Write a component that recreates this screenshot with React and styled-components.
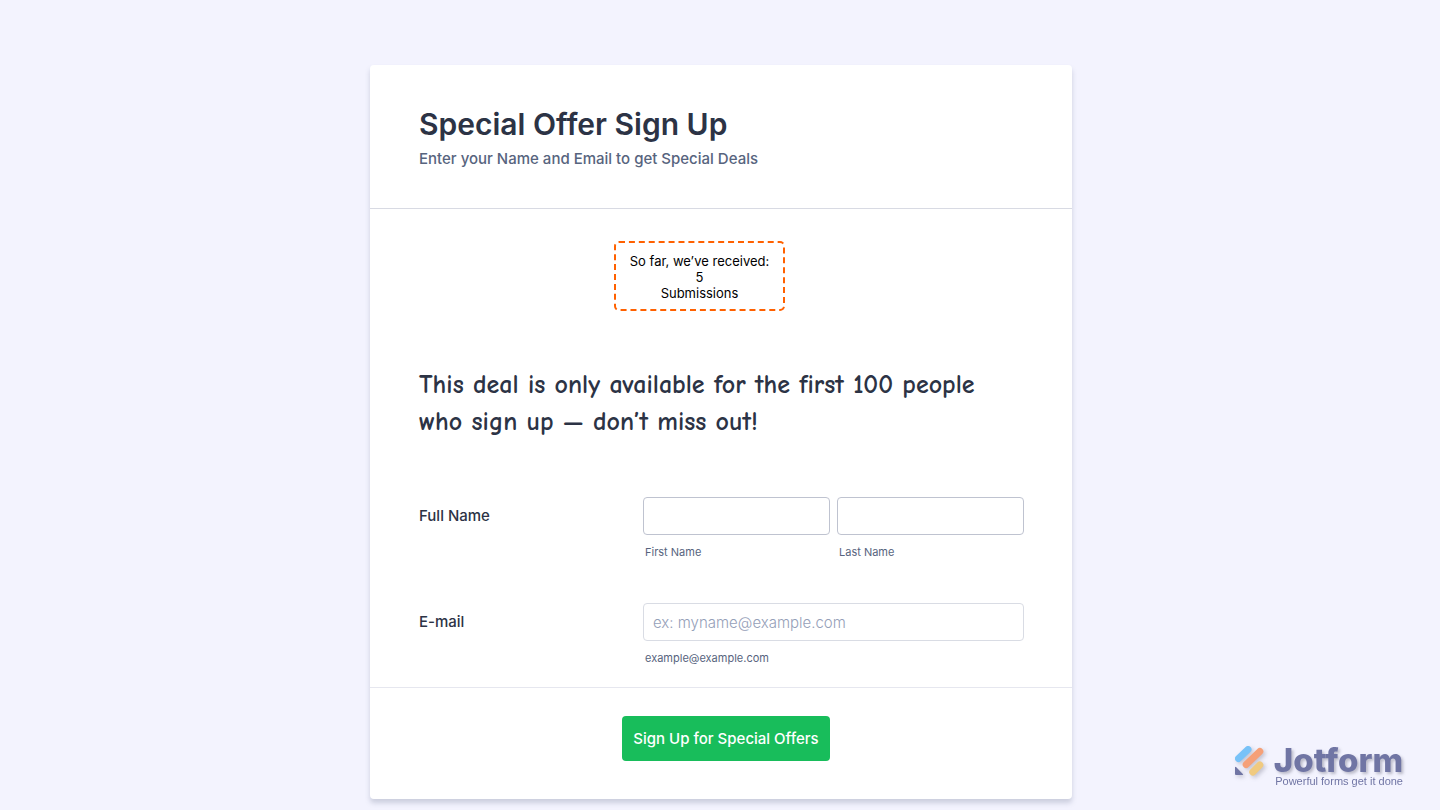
import { useState } from "react";
import styled, { createGlobalStyle } from "styled-components";

const submissions = 5;

export default function App() {
  const [form, setForm] = useState({ first: "", last: "", email: "" });

  const handleChange = (e) => {
    setForm({ ...form, [e.target.name]: e.target.value });
  };

  return (
    <>
      <GlobalStyle />
      <Page>
        <Card onSubmit={(e) => e.preventDefault()}>
          <Header>
            <h1>Special Offer Sign Up</h1>
            <p>Enter your Name and Email to get Special Deals</p>
          </Header>
          <Intro>
            <Counter>
              <span>So far, we’ve received:</span>
              <span>{submissions}</span>
              <span>Submissions</span>
            </Counter>
            <Deal>
              This deal is only available for the first 100 people who sign up
              — don’t miss out!
            </Deal>
          </Intro>
          <Fields>
            <Row role="group" aria-labelledby="name-label">
              <Label as="span" id="name-label">
                Full Name
              </Label>
              <Inputs>
                <Field>
                  <Input
                    id="first"
                    name="first"
                    value={form.first}
                    onChange={handleChange}
                  />
                  <SubLabel htmlFor="first">First Name</SubLabel>
                </Field>
                <Field>
                  <Input
                    id="last"
                    name="last"
                    value={form.last}
                    onChange={handleChange}
                  />
                  <SubLabel htmlFor="last">Last Name</SubLabel>
                </Field>
              </Inputs>
            </Row>
            <Row>
              <Label htmlFor="email">E-mail</Label>
              <Inputs>
                <Field>
                  <Input
                    id="email"
                    name="email"
                    type="email"
                    $light
                    placeholder="ex: myname@example.com"
                    value={form.email}
                    onChange={handleChange}
                  />
                  <SubLabel htmlFor="email">example@example.com</SubLabel>
                </Field>
              </Inputs>
            </Row>
          </Fields>
          <Footer>
            <SubmitButton type="submit">Sign Up for Special Offers</SubmitButton>
          </Footer>
        </Card>
      </Page>
      <Brand>
        <BrandMark />
        <div>
          <BrandName>Jotform</BrandName>
          <Tagline>Powerful forms get it done</Tagline>
        </div>
      </Brand>
    </>
  );
}

function BrandMark() {
  return (
    <svg width="32" height="34" viewBox="0 0 32 34" aria-hidden="true">
      <g strokeWidth="7" strokeLinecap="round">
        <path d="M4.5 13.5L14 4.5" stroke="#78c2f8" />
        <path d="M12.2 19.5L25.8 6.5" stroke="#f5a078" />
        <path d="M18.8 27L25.8 20" stroke="#f0ca80" />
      </g>
      <path
        d="M1 22.5V29Q1 30 2 30H8.4Q9.8 30 8.8 29L2.3 22.2Q1 21 1 22.5Z"
        fill="#7075a4"
      />
    </svg>
  );
}

const GlobalStyle = createGlobalStyle`
  * {
    box-sizing: border-box;
  }
  body {
    margin: 0;
    background: #f3f3fe;
    font-family: Inter, "Liberation Sans", sans-serif;
    color: #2c3345;
  }
  h1, h2, p {
    margin: 0;
  }
`;

const Page = styled.main`
  padding: 65px 16px 11px 18px;
`;

const Card = styled.form`
  max-width: 702px;
  margin: 0 auto;
  background: white;
  border-radius: 4px;
  box-shadow: 0 4px 5px rgba(87, 100, 126, 0.25);
`;

const Header = styled.header`
  padding: 40px 49px 39px;
  border-bottom: 1px solid #d8dae3;
  h1 {
    font-size: 30px;
    line-height: 38px;
    font-weight: 600;
  }
  p {
    margin-top: 6px;
    font-size: 15px;
    line-height: 20px;
    font-weight: 500;
    color: #57647e;
  }
`;

const Intro = styled.section`
  display: flex;
  flex-direction: column;
  align-items: center;
  gap: 56px;
  padding: 32px 92px 0 49px;
`;

const Counter = styled.div`
  display: flex;
  flex-direction: column;
  align-items: center;
  padding: 10px 14px 8px;
  border: 2px dashed #ff6100;
  border-radius: 5px;
  font-size: 13px;
  line-height: 16px;
  color: black;
`;

const Deal = styled.h2`
  width: 100%;
  font-family: Chalkboard, "Comic Sans MS", "Comic Neue", "Open Sans", sans-serif;
  font-size: 26px;
  line-height: 37px;
  font-weight: 700;
`;

const Fields = styled.section`
  display: flex;
  flex-direction: column;
  gap: 42px;
  padding: 56px 48px 20px 49px;
`;

const Row = styled.div`
  display: grid;
  grid-template-columns: 216px 1fr;
  gap: 8px;
`;

const Label = styled.label`
  font-size: 15px;
  line-height: 38px;
  font-weight: 500;
`;

const Inputs = styled.div`
  display: flex;
  gap: 7px;
`;

const Field = styled.div`
  display: flex;
  flex-direction: column;
  flex: 1;
  min-width: 0;
`;

const Input = styled.input`
  width: 100%;
  height: 38px;
  padding: 0 9px;
  border: 1px solid ${({ $light }) => ($light ? "#d9dce4" : "#bfc3d0")};
  border-radius: 4px;
  background: white;
  font-family: inherit;
  font-size: 15px;
  font-weight: 300;
  color: #2c3345;
  &::placeholder {
    color: #95a0b8;
    opacity: 1;
  }
`;

const SubLabel = styled.label`
  margin: 9px 2px 0;
  font-size: 11px;
  line-height: 17px;
  color: #57647e;
`;

const Footer = styled.footer`
  display: flex;
  justify-content: center;
  padding: 28px 0 38px 10px;
  border-top: 1px solid #e6e7ef;
`;

const SubmitButton = styled.button`
  height: 45px;
  padding: 0 11px;
  border: none;
  border-radius: 4px;
  background: #18bd5b;
  color: white;
  font-family: inherit;
  font-size: 15px;
  font-weight: 500;
  white-space: nowrap;
  cursor: pointer;
`;

const Brand = styled.div`
  position: fixed;
  right: 37px;
  bottom: 23px;
  display: flex;
  gap: 8px;
  color: #7075a4;
  svg {
    filter: drop-shadow(2px 2px 2px rgba(80, 80, 100, 0.3));
  }
`;

const BrandName = styled.div`
  font-size: 33px;
  line-height: 31px;
  font-weight: 800;
  text-align: right;
  text-shadow: 2px 2px 3px rgba(80, 80, 100, 0.35);
`;

const Tagline = styled.div`
  font-family: "Liberation Sans", Arial, sans-serif;
  font-size: 11px;
  line-height: 11px;
  text-align: right;
`;
